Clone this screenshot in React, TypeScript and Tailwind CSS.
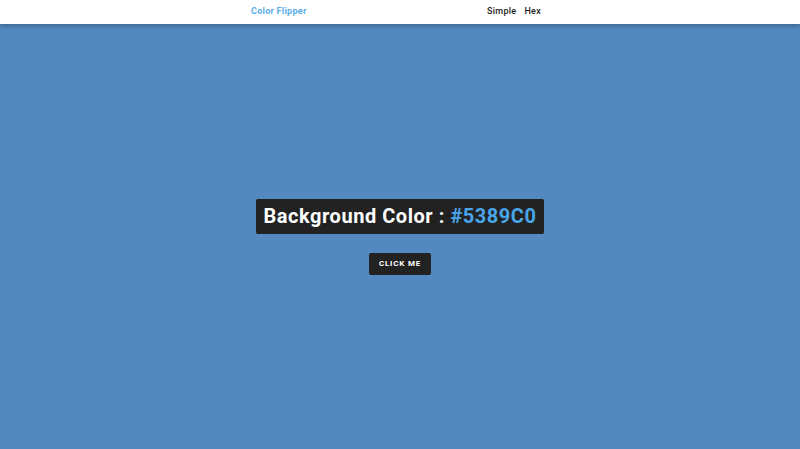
export default function App() {
  return (
    <div className="flex h-[449px] w-full flex-col bg-[#5389c0] font-['Roboto',sans-serif]">
      <nav className="h-6 shrink-0 bg-white shadow-[0_2px_4px_rgba(0,0,0,0.25)]">
        <div className="mx-auto flex h-full w-[298px] items-center justify-between pr-2">
          <h4 className="text-[9px] font-bold tracking-[0.03em] text-[#5aaee8]">Color Flipper</h4>
          <ul className="flex gap-[8px] text-[9px] font-medium tracking-[0.03em] text-[#222]">
            <li>Simple</li>
            <li>Hex</li>
          </ul>
        </div>
      </nav>
      <main className="flex flex-1 flex-col items-center justify-center">
        <h2 className="rounded-[2px] bg-[#222] px-2 py-[3px] text-[20px] font-bold leading-[29px] tracking-[0.027em] text-white">
          Background Color : <span className="text-[#49a6e9]">#5389C0</span>
        </h2>
        <button className="mt-[19px] flex h-[22px] items-center rounded-[2px] bg-[#222] px-[10px] text-[8px] font-bold uppercase tracking-[0.1em] text-white">
          click me
        </button>
      </main>
    </div>
  );
}
